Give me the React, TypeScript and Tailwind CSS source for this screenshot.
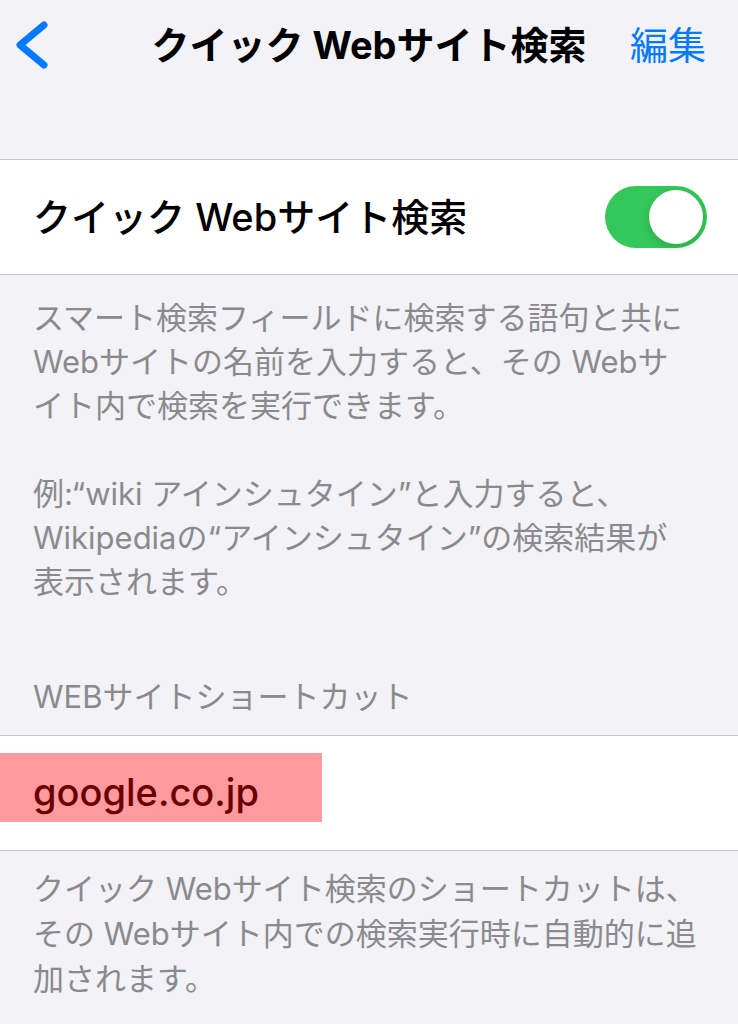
const font = "font-['Inter','Noto_Sans_CJK_JP',sans-serif]";

function Toggle({ on }: { on: boolean }) {
  return (
    <div
      className={`w-[102px] h-[62px] rounded-full p-[4px] flex ${
        on ? "bg-[#34c759] justify-end" : "bg-[#e9e9ea] justify-start"
      }`}
    >
      <div className="w-[54px] h-[54px] rounded-full bg-white shadow-[0_3px_8px_rgba(0,0,0,0.15)]" />
    </div>
  );
}

function BackChevron() {
  return (
    <svg width="36" height="52" viewBox="0 0 36 52" fill="none" className="text-[#007aff]">
      <polyline
        points="30,6 6,26 30,46"
        stroke="currentColor"
        strokeWidth="7"
        strokeLinecap="round"
        strokeLinejoin="round"
      />
    </svg>
  );
}

export default function App() {
  return (
    <div className={`w-[738px] h-[1024px] bg-[#f2f2f7] overflow-hidden ${font}`}>
      {/* nav bar */}
      <div className="h-[90px] grid grid-cols-[1fr_auto_1fr] items-center">
        <div className="pl-[14px] flex items-center">
          <BackChevron />
        </div>
        <h1 className="text-[38px] font-bold text-black">クイック Webサイト検索</h1>
        <div className="flex justify-end pr-[32px]">
          <span className="text-[38px] text-[#007aff]">編集</span>
        </div>
      </div>

      <div className="h-[69px]" />

      {/* toggle row */}
      <div className="bg-white border-y border-[#c6c6c8] h-[116px] flex items-center justify-between pl-[33px] pr-[31px]">
        <span className="text-[38px] font-medium text-black">クイック Webサイト検索</span>
        <Toggle on />
      </div>

      <div className="pt-[21px] px-[33px] text-[31px] leading-[44px] text-[#8a8a8e]">
        <p>
          スマート検索フィールドに検索する語句と共に
          <br />
          Webサイトの名前を入力すると、その Webサ
          <br />
          イト内で検索を実行できます。
        </p>
        <p className="mt-[44px]">
          例:“wiki アインシュタイン”と入力すると、
          <br />
          Wikipediaの“アインシュタイン”の検索結果が
          <br />
          表示されます。
        </p>
      </div>

      <div className="mt-[71px] mb-[16px] px-[33px] text-[31px] leading-[44px] text-[#8a8a8e]">
        WEBサイトショートカット
      </div>

      {/* shortcut row */}
      <div className="bg-white border-y border-[#c6c6c8] h-[116px] flex items-center pb-[12px]">
        <div className="w-[322px] h-[69px] bg-[#ff9a9e] flex items-center pt-[10px] pl-[33px]">
          <span className="text-[38px] font-medium text-[#6b0000]">google.co.jp</span>
        </div>
      </div>

      <div className="pt-[15px] px-[33px] text-[31px] leading-[45px] text-[#8a8a8e]">
        クイック Webサイト検索のショートカットは、
        <br />
        その Webサイト内での検索実行時に自動的に追
        <br />
        加されます。
      </div>
    </div>
  );
}
